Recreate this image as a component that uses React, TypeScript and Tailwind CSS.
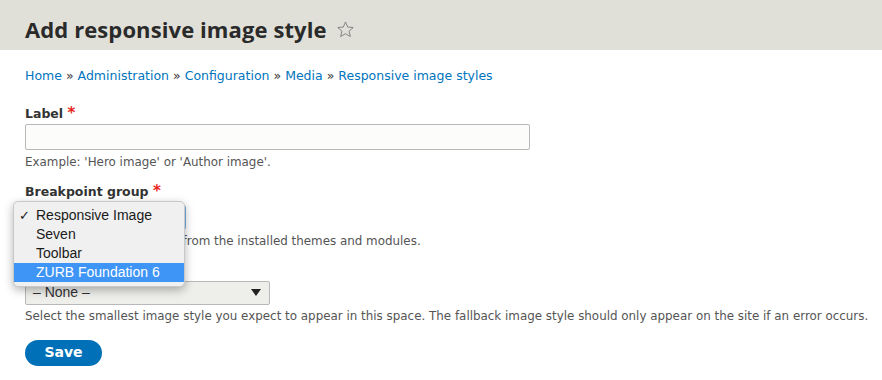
import React from "react";

const crumbs = ["Home", "Administration", "Configuration", "Media", "Responsive image styles"];
const options = ["Responsive Image", "Seven", "Toolbar", "ZURB Foundation 6"];

export default function App() {
  return (
    <div className="w-[882px] h-[380px] bg-white overflow-hidden relative" style={{ fontFamily: '"DejaVu Sans", Verdana, sans-serif' }}>
      <div className="h-[50px] bg-[#e0e0d8] pl-[25px] flex items-center">
        <h1 className="text-[22px] font-bold text-[#2a2a2a] tracking-[0.1px] flex items-center gap-[9px] pt-[9px]" style={{ fontFamily: '"Open Sans", "DejaVu Sans", sans-serif' }}>
          <span>Add responsive image style</span>
          <svg width="19" height="19" viewBox="0 0 24 24">
            <path d="M12 2.5l2.8 6.4 6.9.6-5.2 4.6 1.6 6.8L12 17.3l-6.1 3.6 1.6-6.8-5.2-4.6 6.9-.6z" fill="none" stroke="#777" strokeWidth="1.1" strokeLinejoin="round" />
          </svg>
        </h1>
      </div>
      <div className="px-[25px]">
        <div className="mt-[17px] text-[12.5px] text-[#0074bd] flex gap-[4px]">
          {crumbs.map((c, i) => (
            <span key={c} className="flex gap-[4px]">
              {i > 0 ? <span className="text-[#333]">»</span> : null}
              <span>{c}</span>
            </span>
          ))}
        </div>
        <div className="mt-[18px]">
          <div className="text-[12.5px] font-bold text-[#333] leading-[18px]">
            Label <span className="text-[#e8261c] text-[15px]">*</span>
          </div>
          <div className="mt-[1px] w-[505px] h-[26px] border border-[#b8b8b8] rounded-[2px] bg-[#fcfcfa]" />
          <div className="mt-[4px] text-[11.9px] text-[#555] leading-[16px]">Example: 'Hero image' or 'Author image'.</div>
        </div>
        <div className="mt-[12px]">
          <div className="text-[12.5px] font-bold text-[#333] leading-[18px]">
            Breakpoint group <span className="text-[#e8261c] text-[15px]">*</span>
          </div>
          <div className="mt-[4px] w-[161px] h-[25px] border-2 border-[#7ab0e8] rounded-[3px] bg-[#f4f4f2]" />
          <div className="mt-[3px] text-[11.9px] text-[#555] leading-[16px]">Select a breakpoint group from the installed themes and modules.</div>
        </div>
        <div className="mt-[11px]">
          <div className="text-[12.5px] font-bold text-[#333] leading-[18px]">Fallback image style</div>
          <div className="mt-[3px] w-[245px] h-[24px] border border-[#b8b8b8] rounded-[2px] bg-[#eeeeea] flex items-center justify-between pl-[7px] pr-[8px]">
            <span className="text-[14px] text-[#333]" style={{ fontFamily: '"Liberation Sans", Arial, sans-serif' }}>– None –</span>
            <svg width="10" height="7" viewBox="0 0 10 7"><path d="M0 0h10L5 7z" fill="#222" /></svg>
          </div>
          <div className="mt-[3px] text-[11.9px] text-[#555] leading-[16px] whitespace-nowrap">
            Select the smallest image style you expect to appear in this space. The fallback image style should only appear on the site if an error occurs.
          </div>
        </div>
        <div className="mt-[16px] w-[77px] h-[26px] rounded-full bg-[#0071b8] text-white font-bold text-[14px] flex items-center justify-center">
          Save
        </div>
      </div>

      <div
        className="absolute left-[13px] top-[201px] w-[172px] bg-[#f0f0f0] rounded-[5px] border border-[#c8c8c8] shadow-[0_3px_10px_rgba(0,0,0,0.3)] py-[4px] text-[14px] text-[#1a1a1a]"
        style={{ fontFamily: '"Liberation Sans", Arial, sans-serif' }}
      >
        {options.map((o, i) => (
          <div key={o} className={i === 3 ? "h-[19px] flex items-center pl-[22px] relative bg-[#3e95f6] text-white" : "h-[19px] flex items-center pl-[22px] relative"}>
            {i === 0 ? <span className="absolute left-[5px] text-[13px]">✓</span> : null}
            {o}
          </div>
        ))}
      </div>
    </div>
  );
}
